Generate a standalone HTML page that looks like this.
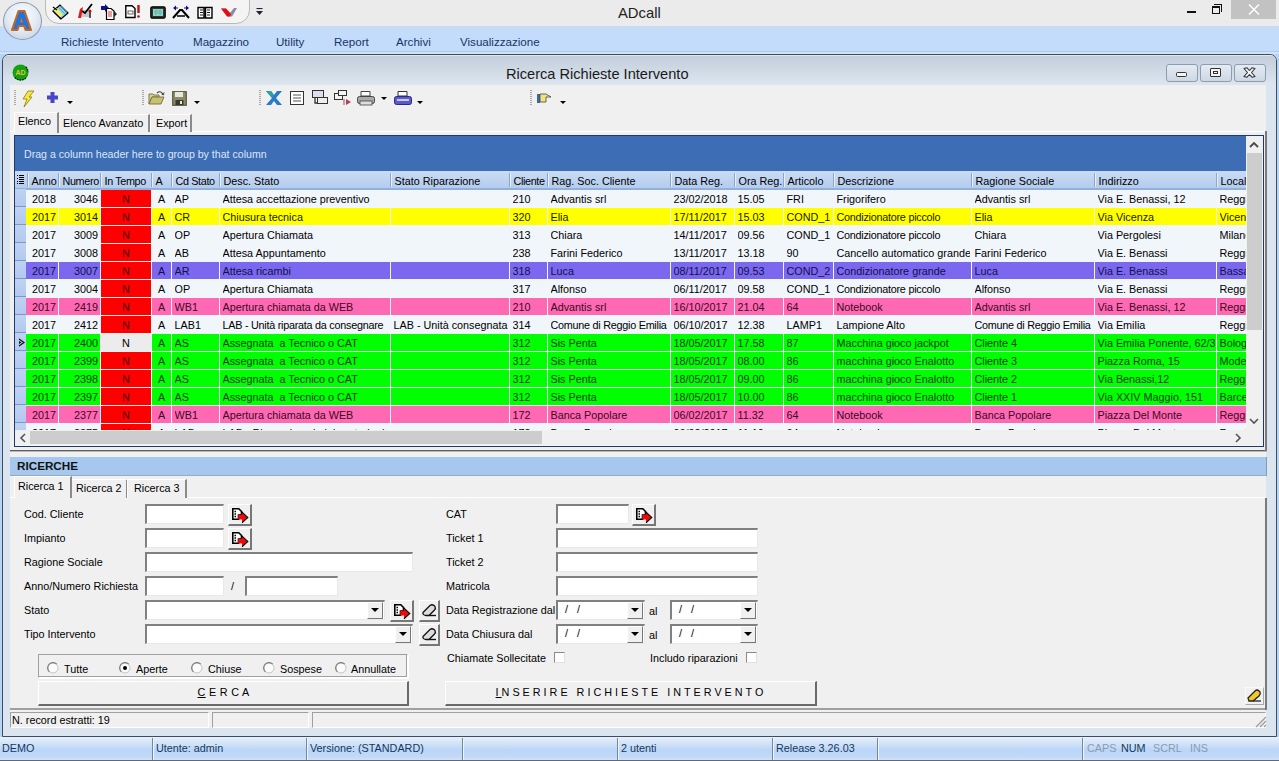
<!DOCTYPE html>
<html><head><meta charset="utf-8"><style>
*{box-sizing:border-box}
body{margin:0;width:1279px;height:761px;overflow:hidden;position:relative;background:#b9d4f1;font-family:"Liberation Sans",sans-serif;font-size:10.8px;color:#000}
div{position:absolute}
.hdr{background:linear-gradient(#cadcf4,#b5ccee);border-bottom:2px solid #91b0e0}
.ind-h{width:12px;height:18px}
.hsep{top:173px;width:2px;height:14px;border-left:1px solid #8aa6cf;border-right:1px solid #e6f0fb}
.ht{top:171px;height:18px;line-height:20px;white-space:nowrap;overflow:hidden;padding-left:1px}
.ind{left:15px;width:11px;height:18px;background:linear-gradient(#bfd2f3,#b3c9ee);border-bottom:1px solid #8096c6}
.cb{height:17px}
.ct{height:17px;line-height:18px;white-space:nowrap;overflow:hidden}
.lbl{white-space:nowrap}
.cwb{border:1px solid #8e9cb0;border-radius:3px;background:linear-gradient(#e4ebf3,#cdd8e5)}
.sp{border-top:1px solid #a0a0a0;border-left:1px solid #a0a0a0;border-right:1px solid #fff;border-bottom:1px solid #fff}
.bigbtn{background:#f0f0f0;border-top:1px solid #fff;border-left:1px solid #fff;border-right:2px solid #6a6a6a;border-bottom:2px solid #6a6a6a}
.inp{background:#fff;border-top:2px solid #808080;border-left:2px solid #808080;border-right:1px solid #e8e8e8;border-bottom:1px solid #e8e8e8}
.btn{background:#f0f0f0;border-top:1px solid #fff;border-left:1px solid #fff;border-right:2px solid #777;border-bottom:2px solid #777}
.dd{background:#f0f0f0;border-top:1px solid #fff;border-left:1px solid #fff;border-right:1px solid #777;border-bottom:1px solid #777}
</style></head><body>
<!-- title bar -->
<div style="left:0;top:0;width:1279px;height:26px;background:#ebebeb"></div>
<div style="left:618px;top:5px;font-size:14.8px;color:#222;white-space:nowrap">ADcall</div>
<!-- window controls -->
<div style="left:1187px;top:11px;width:9px;height:2px;background:#111"></div>
<div style="left:1214px;top:4px;width:8px;height:8px;border:1px solid #111;border-left:none;border-bottom:none"></div>
<div style="left:1212px;top:6px;width:8px;height:8px;border:1px solid #111;border-top-width:2px"></div>
<div style="left:1231px;top:0;width:45px;height:19px;background:#c2c2c2"></div>
<svg style="position:absolute;left:1248px;top:4px" width="12" height="11"><path d="M1 0.5 L11 10.5 M11 0.5 L1 10.5" stroke="#fff" stroke-width="1.4"/></svg>
<!-- menu bar -->
<div style="left:0;top:25px;width:1279px;height:29px;background:linear-gradient(#e6eef8 0 1px,#c9dbef 1px 4px,#c3dcfb 4px 26px,#b3cbe6 26px 27px,#cfe2f8 27px)"></div>
<div class="lbl" style="left:61px;top:35px;font-size:11.6px;color:#173566">Richieste Intervento</div>
<div class="lbl" style="left:193px;top:35px;font-size:11.6px;color:#173566">Magazzino</div>
<div class="lbl" style="left:276px;top:35px;font-size:11.6px;color:#173566">Utility</div>
<div class="lbl" style="left:334px;top:35px;font-size:11.6px;color:#173566">Report</div>
<div class="lbl" style="left:396px;top:35px;font-size:11.6px;color:#173566">Archivi</div>
<div class="lbl" style="left:460px;top:35px;font-size:11.6px;color:#173566">Visualizzazione</div>
<!-- QAT -->
<div style="left:45px;top:-6px;width:205px;height:30px;border:1px solid #b9b9b9;border-radius:0 0 14px 14px;background:#f4f4f4"></div>
<!-- orb -->
<div style="left:3px;top:2px;width:39px;height:38px;border-radius:50%;border:1px solid #8c9aae;background:radial-gradient(circle at 50% 35%,#ffffff,#dfe8f2 55%,#b9c9da)"></div>
<svg style="position:absolute;left:9px;top:8px" width="26" height="26"><path d="M9.5 3 H15.5 L22 22 H16.5 L15.2 18 H9.8 L8.5 22 H3 Z" fill="#2274d8" stroke="#c2692a" stroke-width="2.1" stroke-linejoin="round"/><path d="M11 14.5 H14 L12.5 9.5 Z" fill="#c8743a"/></svg>


<svg style="position:absolute;left:52px;top:4px" width="18" height="16"><path d="M1 7 L8 1 L16 9 L9 15 Z" fill="#8fd6ea" stroke="#000" stroke-width="1.2"/><path d="M1 7 L5 4 L11 11 L7 14 Z" fill="#f2ee70"/><path d="M1 7 L9 15" stroke="#000" stroke-width="1.2"/><path d="M6 3 L13 10 M9 2 L15 8" stroke="#4aa0c8" stroke-width="0.8"/><path d="M1 3 L5 6" stroke="#000" stroke-width="1.2"/></svg>
<svg style="position:absolute;left:77px;top:3px" width="17" height="16"><path d="M3 14 L4 7 L14 7 L14 14 Z" fill="#c8c8d0"/><path d="M1 15 L3 6 L6 4 L4 15 Z" fill="#e01818"/><path d="M5 8 L8 10 L15 1" fill="none" stroke="#000" stroke-width="1.8"/><path d="M13 7 V15" stroke="#000" stroke-width="1.2"/><circle cx="13" cy="8" r="1.5" fill="#c01010"/></svg>
<svg style="position:absolute;left:101px;top:4px" width="17" height="16"><path d="M0 2 H4 V0 L8 4 L4 8 V6 H0 Z" fill="#10108a"/><path d="M5.5 4.5 H10 L13 7 V15.5 H5.5 Z" fill="#fff" stroke="#000" stroke-width="1.2"/><path d="M7 8 H11 M7 10 H11 M7 12 H11" stroke="#d02020" stroke-width="0.9"/><path d="M13 7 L16 10 L13 13" fill="#222"/><path d="M5 16.5 H12" stroke="#000" stroke-dasharray="1 1"/></svg>
<svg style="position:absolute;left:125px;top:5px" width="17" height="14"><path d="M0.8 0.8 H7 L10 3.5 V12.5 H0.8 Z" fill="#fff" stroke="#000" stroke-width="1.4"/><rect x="3" y="6" width="5" height="3" fill="none" stroke="#444" stroke-width="0.8"/><path d="M13.5 0 V8" stroke="#b01818" stroke-width="2.4"/><circle cx="13.5" cy="11.5" r="1.3" fill="#b01818"/></svg>
<svg style="position:absolute;left:150px;top:6px" width="16" height="13"><rect x="0.8" y="0.8" width="14.4" height="11.4" rx="1.5" fill="#333" stroke="#000" stroke-width="1.2"/><rect x="3" y="3" width="10" height="7" fill="#8ad8c8"/><path d="M4 5 H12 M4 7 H12 M6 3.5 V9.5 M10 3.5 V9.5" stroke="#5aa8a0" stroke-width="0.7"/></svg>
<svg style="position:absolute;left:172px;top:5px" width="18" height="14"><path d="M1 13 L8 5 L10 5 L17 13" fill="none" stroke="#000" stroke-width="2"/><path d="M5 11 H13" stroke="#000" stroke-width="1.5"/><path d="M1 3 L4 0.5 V5.5 Z M17 3 L14 0.5 V5.5 Z" fill="#10107a"/><path d="M3 3 H6 M12 3 H15" stroke="#10107a" stroke-width="1.2"/></svg>
<svg style="position:absolute;left:197px;top:6px" width="16" height="13"><path d="M1 1.5 H7 V12 H1 Z M8.5 1.5 H15 V12 H8.5 Z" fill="#fff" stroke="#000" stroke-width="1.4"/><path d="M3 4 H6 M3 6.5 H6 M3 9 H6 M10 4 H13 M10 6.5 H13 M10 9 H13" stroke="#000" stroke-width="0.9"/></svg>
<svg style="position:absolute;left:221px;top:8px" width="16" height="9"><path d="M0 0.5 H5 L9 5 L13 0 H16 L11 8.5 H7 Z" fill="#8a8aa8"/><path d="M0 0.5 H5 L10 6 L9 8.5 H6 Z" fill="#e01010"/></svg>
<svg style="position:absolute;left:256px;top:8px" width="7" height="8"><path d="M0.5 0.5 H6.5" stroke="#223" stroke-width="1.2"/><path d="M0 3 H7 L3.5 7 Z" fill="#223"/></svg>

<!-- MDI child -->
<div style="left:2px;top:54px;width:1275px;height:683px;border:1px solid #3f4d60;border-radius:7px 7px 0 0;background:#dae5f0"></div>
<div style="left:3px;top:55px;width:1273px;height:30px;border-radius:6px 6px 0 0;background:linear-gradient(#dfe8f2 0 1px,#c3cedb 1px,#dde6ef)"></div>
<div style="left:10px;top:85px;width:1256px;height:643px;background:#f0f0f0"></div>

<div style="left:506px;top:66px;font-size:14.6px;color:#1a1a1a;white-space:nowrap">Ricerca Richieste Intervento</div>
<!-- grid -->
<div style="left:14px;top:135px;width:1250px;height:312px;border:1px solid #1d3a6b;background:#f1f6fb"></div>
<div style="left:15px;top:136px;width:1231px;height:35px;background:#3d6db5"></div>
<div class="lbl" style="left:24px;top:148px;font-size:10.6px;color:#dbe7f7">Drag a column header here to group by that column</div>
<div style="left:15px;top:171px;width:1231px;height:259px;overflow:hidden">
<div style="left:-15px;top:-171px;width:1300px;height:500px">
<div class="hdr" style="left:15px;top:171px;width:1231px;height:19px"></div>
<div class="ind-h" style="left:15px;top:171px;"><svg width="12" height="18"><g fill="#000"><rect x="2" y="4" width="1" height="1"/><rect x="4" y="4" width="5" height="1"/><rect x="2" y="7" width="1" height="1"/><rect x="4" y="6" width="5" height="1"/><rect x="4" y="8" width="5" height="1"/><rect x="2" y="10" width="1" height="1"/><rect x="4" y="10" width="5" height="1"/><rect x="2" y="12" width="1" height="1"/><rect x="4" y="12" width="5" height="1"/></g></svg></div>
<div class="hsep" style="left:27px"></div>
<div class="ht" style="left:30.5px;width:27.5px">Anno</div>
<div class="hsep" style="left:58px"></div>
<div class="ht" style="left:61.5px;width:38.5px;letter-spacing:-0.35px">Numero</div>
<div class="hsep" style="left:100px"></div>
<div class="ht" style="left:103.5px;width:47.5px;letter-spacing:-0.35px">In Tempo</div>
<div class="hsep" style="left:151px"></div>
<div class="ht" style="left:154.5px;width:16.5px">A</div>
<div class="hsep" style="left:171px"></div>
<div class="ht" style="left:174.5px;width:44.5px;letter-spacing:-0.35px">Cd Stato</div>
<div class="hsep" style="left:219px"></div>
<div class="ht" style="left:222.5px;width:167.5px">Desc. Stato</div>
<div class="hsep" style="left:390px"></div>
<div class="ht" style="left:393.5px;width:115.5px">Stato Riparazione</div>
<div class="hsep" style="left:509px"></div>
<div class="ht" style="left:512.5px;width:34.5px;letter-spacing:-0.35px">Cliente</div>
<div class="hsep" style="left:547px"></div>
<div class="ht" style="left:550.5px;width:119.5px">Rag. Soc. Cliente</div>
<div class="hsep" style="left:670px"></div>
<div class="ht" style="left:673.5px;width:60.5px">Data Reg.</div>
<div class="hsep" style="left:734px"></div>
<div class="ht" style="left:737.5px;width:45.5px">Ora Reg.</div>
<div class="hsep" style="left:783px"></div>
<div class="ht" style="left:786.5px;width:46.5px">Articolo</div>
<div class="hsep" style="left:833px"></div>
<div class="ht" style="left:836.5px;width:134.5px">Descrizione</div>
<div class="hsep" style="left:971px"></div>
<div class="ht" style="left:974.5px;width:119.5px">Ragione Sociale</div>
<div class="hsep" style="left:1094px"></div>
<div class="ht" style="left:1097.5px;width:118.5px">Indirizzo</div>
<div class="hsep" style="left:1216px"></div>
<div class="ht" style="left:1219.5px;width:180.5px">Località</div>
<div class="ind" style="top:189px"></div>
<div class="cb" style="left:26px;top:190px;width:32px;background:#f1f6fb"></div>
<div class="ct" style="left:28px;width:28px;text-align:right;top:190px;color:#000">2018</div>
<div class="cb" style="left:59px;top:190px;width:41px;background:#f1f6fb"></div>
<div class="ct" style="left:59px;width:39px;text-align:right;top:190px;color:#000">3046</div>
<div class="cb" style="left:101px;top:190px;width:50px;background:#ff0000"></div>
<div class="ct" style="left:101px;width:50px;text-align:center;top:190px;color:#3a0000">N</div>
<div class="cb" style="left:152px;top:190px;width:19px;background:#f1f6fb"></div>
<div class="ct" style="left:152px;width:19px;text-align:center;top:190px;color:#000">A</div>
<div class="cb" style="left:172px;top:190px;width:47px;background:#f1f6fb"></div>
<div class="ct" style="left:174.5px;width:43.5px;top:190px;color:#000">AP</div>
<div class="cb" style="left:220px;top:190px;width:170px;background:#f1f6fb"></div>
<div class="ct" style="left:222.5px;width:166.5px;top:190px;color:#000">Attesa accettazione preventivo</div>
<div class="cb" style="left:391px;top:190px;width:118px;background:#f1f6fb"></div>
<div class="cb" style="left:510px;top:190px;width:37px;background:#f1f6fb"></div>
<div class="ct" style="left:512.5px;width:33.5px;top:190px;color:#000">210</div>
<div class="cb" style="left:548px;top:190px;width:122px;background:#f1f6fb"></div>
<div class="ct" style="left:550.5px;width:118.5px;top:190px;color:#000">Advantis srl</div>
<div class="cb" style="left:671px;top:190px;width:63px;background:#f1f6fb"></div>
<div class="ct" style="left:673.5px;width:59.5px;top:190px;color:#000">23/02/2018</div>
<div class="cb" style="left:735px;top:190px;width:48px;background:#f1f6fb"></div>
<div class="ct" style="left:737.5px;width:44.5px;top:190px;color:#000">15.05</div>
<div class="cb" style="left:784px;top:190px;width:49px;background:#f1f6fb"></div>
<div class="ct" style="left:786.5px;width:45.5px;top:190px;color:#000">FRI</div>
<div class="cb" style="left:834px;top:190px;width:137px;background:#f1f6fb"></div>
<div class="ct" style="left:836.5px;width:133.5px;top:190px;color:#000">Frigorifero</div>
<div class="cb" style="left:972px;top:190px;width:122px;background:#f1f6fb"></div>
<div class="ct" style="left:974.5px;width:118.5px;top:190px;color:#000">Advantis srl</div>
<div class="cb" style="left:1095px;top:190px;width:121px;background:#f1f6fb"></div>
<div class="ct" style="left:1097.5px;width:117.5px;top:190px;color:#000">Via E. Benassi, 12</div>
<div class="cb" style="left:1217px;top:190px;width:183px;background:#f1f6fb"></div>
<div class="ct" style="left:1219.5px;width:179.5px;top:190px;color:#000">Reggio Emilia</div>
<div class="ind" style="top:207px"></div>
<div class="cb" style="left:26px;top:208px;width:32px;background:#ffff00"></div>
<div class="ct" style="left:28px;width:28px;text-align:right;top:208px;color:#1a1a00">2017</div>
<div class="cb" style="left:59px;top:208px;width:41px;background:#ffff00"></div>
<div class="ct" style="left:59px;width:39px;text-align:right;top:208px;color:#1a1a00">3014</div>
<div class="cb" style="left:101px;top:208px;width:50px;background:#ff0000"></div>
<div class="ct" style="left:101px;width:50px;text-align:center;top:208px;color:#3a0000">N</div>
<div class="cb" style="left:152px;top:208px;width:19px;background:#ffff00"></div>
<div class="ct" style="left:152px;width:19px;text-align:center;top:208px;color:#1a1a00">A</div>
<div class="cb" style="left:172px;top:208px;width:47px;background:#ffff00"></div>
<div class="ct" style="left:174.5px;width:43.5px;top:208px;color:#1a1a00">CR</div>
<div class="cb" style="left:220px;top:208px;width:170px;background:#ffff00"></div>
<div class="ct" style="left:222.5px;width:166.5px;top:208px;color:#1a1a00">Chiusura tecnica</div>
<div class="cb" style="left:391px;top:208px;width:118px;background:#ffff00"></div>
<div class="cb" style="left:510px;top:208px;width:37px;background:#ffff00"></div>
<div class="ct" style="left:512.5px;width:33.5px;top:208px;color:#1a1a00">320</div>
<div class="cb" style="left:548px;top:208px;width:122px;background:#ffff00"></div>
<div class="ct" style="left:550.5px;width:118.5px;top:208px;color:#1a1a00">Elia</div>
<div class="cb" style="left:671px;top:208px;width:63px;background:#ffff00"></div>
<div class="ct" style="left:673.5px;width:59.5px;top:208px;color:#1a1a00">17/11/2017</div>
<div class="cb" style="left:735px;top:208px;width:48px;background:#ffff00"></div>
<div class="ct" style="left:737.5px;width:44.5px;top:208px;color:#1a1a00">15.03</div>
<div class="cb" style="left:784px;top:208px;width:49px;background:#ffff00"></div>
<div class="ct" style="left:786.5px;width:45.5px;top:208px;color:#1a1a00">COND_1</div>
<div class="cb" style="left:834px;top:208px;width:137px;background:#ffff00"></div>
<div class="ct" style="left:836.5px;width:133.5px;top:208px;color:#1a1a00;letter-spacing:-0.25px">Condizionatore piccolo</div>
<div class="cb" style="left:972px;top:208px;width:122px;background:#ffff00"></div>
<div class="ct" style="left:974.5px;width:118.5px;top:208px;color:#1a1a00">Elia</div>
<div class="cb" style="left:1095px;top:208px;width:121px;background:#ffff00"></div>
<div class="ct" style="left:1097.5px;width:117.5px;top:208px;color:#1a1a00">Via Vicenza</div>
<div class="cb" style="left:1217px;top:208px;width:183px;background:#ffff00"></div>
<div class="ct" style="left:1219.5px;width:179.5px;top:208px;color:#1a1a00">Vicenza</div>
<div class="ind" style="top:225px"></div>
<div class="cb" style="left:26px;top:226px;width:32px;background:#f1f6fb"></div>
<div class="ct" style="left:28px;width:28px;text-align:right;top:226px;color:#000">2017</div>
<div class="cb" style="left:59px;top:226px;width:41px;background:#f1f6fb"></div>
<div class="ct" style="left:59px;width:39px;text-align:right;top:226px;color:#000">3009</div>
<div class="cb" style="left:101px;top:226px;width:50px;background:#ff0000"></div>
<div class="ct" style="left:101px;width:50px;text-align:center;top:226px;color:#3a0000">N</div>
<div class="cb" style="left:152px;top:226px;width:19px;background:#f1f6fb"></div>
<div class="ct" style="left:152px;width:19px;text-align:center;top:226px;color:#000">A</div>
<div class="cb" style="left:172px;top:226px;width:47px;background:#f1f6fb"></div>
<div class="ct" style="left:174.5px;width:43.5px;top:226px;color:#000">OP</div>
<div class="cb" style="left:220px;top:226px;width:170px;background:#f1f6fb"></div>
<div class="ct" style="left:222.5px;width:166.5px;top:226px;color:#000">Apertura Chiamata</div>
<div class="cb" style="left:391px;top:226px;width:118px;background:#f1f6fb"></div>
<div class="cb" style="left:510px;top:226px;width:37px;background:#f1f6fb"></div>
<div class="ct" style="left:512.5px;width:33.5px;top:226px;color:#000">313</div>
<div class="cb" style="left:548px;top:226px;width:122px;background:#f1f6fb"></div>
<div class="ct" style="left:550.5px;width:118.5px;top:226px;color:#000">Chiara</div>
<div class="cb" style="left:671px;top:226px;width:63px;background:#f1f6fb"></div>
<div class="ct" style="left:673.5px;width:59.5px;top:226px;color:#000">14/11/2017</div>
<div class="cb" style="left:735px;top:226px;width:48px;background:#f1f6fb"></div>
<div class="ct" style="left:737.5px;width:44.5px;top:226px;color:#000">09.56</div>
<div class="cb" style="left:784px;top:226px;width:49px;background:#f1f6fb"></div>
<div class="ct" style="left:786.5px;width:45.5px;top:226px;color:#000">COND_1</div>
<div class="cb" style="left:834px;top:226px;width:137px;background:#f1f6fb"></div>
<div class="ct" style="left:836.5px;width:133.5px;top:226px;color:#000;letter-spacing:-0.25px">Condizionatore piccolo</div>
<div class="cb" style="left:972px;top:226px;width:122px;background:#f1f6fb"></div>
<div class="ct" style="left:974.5px;width:118.5px;top:226px;color:#000">Chiara</div>
<div class="cb" style="left:1095px;top:226px;width:121px;background:#f1f6fb"></div>
<div class="ct" style="left:1097.5px;width:117.5px;top:226px;color:#000">Via Pergolesi</div>
<div class="cb" style="left:1217px;top:226px;width:183px;background:#f1f6fb"></div>
<div class="ct" style="left:1219.5px;width:179.5px;top:226px;color:#000">Milano</div>
<div class="ind" style="top:243px"></div>
<div class="cb" style="left:26px;top:244px;width:32px;background:#f1f6fb"></div>
<div class="ct" style="left:28px;width:28px;text-align:right;top:244px;color:#000">2017</div>
<div class="cb" style="left:59px;top:244px;width:41px;background:#f1f6fb"></div>
<div class="ct" style="left:59px;width:39px;text-align:right;top:244px;color:#000">3008</div>
<div class="cb" style="left:101px;top:244px;width:50px;background:#ff0000"></div>
<div class="ct" style="left:101px;width:50px;text-align:center;top:244px;color:#3a0000">N</div>
<div class="cb" style="left:152px;top:244px;width:19px;background:#f1f6fb"></div>
<div class="ct" style="left:152px;width:19px;text-align:center;top:244px;color:#000">A</div>
<div class="cb" style="left:172px;top:244px;width:47px;background:#f1f6fb"></div>
<div class="ct" style="left:174.5px;width:43.5px;top:244px;color:#000">AB</div>
<div class="cb" style="left:220px;top:244px;width:170px;background:#f1f6fb"></div>
<div class="ct" style="left:222.5px;width:166.5px;top:244px;color:#000">Attesa Appuntamento</div>
<div class="cb" style="left:391px;top:244px;width:118px;background:#f1f6fb"></div>
<div class="cb" style="left:510px;top:244px;width:37px;background:#f1f6fb"></div>
<div class="ct" style="left:512.5px;width:33.5px;top:244px;color:#000">238</div>
<div class="cb" style="left:548px;top:244px;width:122px;background:#f1f6fb"></div>
<div class="ct" style="left:550.5px;width:118.5px;top:244px;color:#000">Farini Federico</div>
<div class="cb" style="left:671px;top:244px;width:63px;background:#f1f6fb"></div>
<div class="ct" style="left:673.5px;width:59.5px;top:244px;color:#000">13/11/2017</div>
<div class="cb" style="left:735px;top:244px;width:48px;background:#f1f6fb"></div>
<div class="ct" style="left:737.5px;width:44.5px;top:244px;color:#000">13.18</div>
<div class="cb" style="left:784px;top:244px;width:49px;background:#f1f6fb"></div>
<div class="ct" style="left:786.5px;width:45.5px;top:244px;color:#000">90</div>
<div class="cb" style="left:834px;top:244px;width:137px;background:#f1f6fb"></div>
<div class="ct" style="left:836.5px;width:133.5px;top:244px;color:#000">Cancello automatico grande</div>
<div class="cb" style="left:972px;top:244px;width:122px;background:#f1f6fb"></div>
<div class="ct" style="left:974.5px;width:118.5px;top:244px;color:#000">Farini Federico</div>
<div class="cb" style="left:1095px;top:244px;width:121px;background:#f1f6fb"></div>
<div class="ct" style="left:1097.5px;width:117.5px;top:244px;color:#000">Via E. Benassi</div>
<div class="cb" style="left:1217px;top:244px;width:183px;background:#f1f6fb"></div>
<div class="ct" style="left:1219.5px;width:179.5px;top:244px;color:#000">Reggio Emilia</div>
<div class="ind" style="top:261px"></div>
<div class="cb" style="left:26px;top:262px;width:32px;background:#7b68ee"></div>
<div class="ct" style="left:28px;width:28px;text-align:right;top:262px;color:#10104a">2017</div>
<div class="cb" style="left:59px;top:262px;width:41px;background:#7b68ee"></div>
<div class="ct" style="left:59px;width:39px;text-align:right;top:262px;color:#10104a">3007</div>
<div class="cb" style="left:101px;top:262px;width:50px;background:#ff0000"></div>
<div class="ct" style="left:101px;width:50px;text-align:center;top:262px;color:#3a0000">N</div>
<div class="cb" style="left:152px;top:262px;width:19px;background:#7b68ee"></div>
<div class="ct" style="left:152px;width:19px;text-align:center;top:262px;color:#10104a">A</div>
<div class="cb" style="left:172px;top:262px;width:47px;background:#7b68ee"></div>
<div class="ct" style="left:174.5px;width:43.5px;top:262px;color:#10104a">AR</div>
<div class="cb" style="left:220px;top:262px;width:170px;background:#7b68ee"></div>
<div class="ct" style="left:222.5px;width:166.5px;top:262px;color:#10104a">Attesa ricambi</div>
<div class="cb" style="left:391px;top:262px;width:118px;background:#7b68ee"></div>
<div class="cb" style="left:510px;top:262px;width:37px;background:#7b68ee"></div>
<div class="ct" style="left:512.5px;width:33.5px;top:262px;color:#10104a">318</div>
<div class="cb" style="left:548px;top:262px;width:122px;background:#7b68ee"></div>
<div class="ct" style="left:550.5px;width:118.5px;top:262px;color:#10104a">Luca</div>
<div class="cb" style="left:671px;top:262px;width:63px;background:#7b68ee"></div>
<div class="ct" style="left:673.5px;width:59.5px;top:262px;color:#10104a">08/11/2017</div>
<div class="cb" style="left:735px;top:262px;width:48px;background:#7b68ee"></div>
<div class="ct" style="left:737.5px;width:44.5px;top:262px;color:#10104a">09.53</div>
<div class="cb" style="left:784px;top:262px;width:49px;background:#7b68ee"></div>
<div class="ct" style="left:786.5px;width:45.5px;top:262px;color:#10104a">COND_2</div>
<div class="cb" style="left:834px;top:262px;width:137px;background:#7b68ee"></div>
<div class="ct" style="left:836.5px;width:133.5px;top:262px;color:#10104a">Condizionatore grande</div>
<div class="cb" style="left:972px;top:262px;width:122px;background:#7b68ee"></div>
<div class="ct" style="left:974.5px;width:118.5px;top:262px;color:#10104a">Luca</div>
<div class="cb" style="left:1095px;top:262px;width:121px;background:#7b68ee"></div>
<div class="ct" style="left:1097.5px;width:117.5px;top:262px;color:#10104a">Via E. Benassi</div>
<div class="cb" style="left:1217px;top:262px;width:183px;background:#7b68ee"></div>
<div class="ct" style="left:1219.5px;width:179.5px;top:262px;color:#10104a">Bassano</div>
<div class="ind" style="top:279px"></div>
<div class="cb" style="left:26px;top:280px;width:32px;background:#f1f6fb"></div>
<div class="ct" style="left:28px;width:28px;text-align:right;top:280px;color:#000">2017</div>
<div class="cb" style="left:59px;top:280px;width:41px;background:#f1f6fb"></div>
<div class="ct" style="left:59px;width:39px;text-align:right;top:280px;color:#000">3004</div>
<div class="cb" style="left:101px;top:280px;width:50px;background:#ff0000"></div>
<div class="ct" style="left:101px;width:50px;text-align:center;top:280px;color:#3a0000">N</div>
<div class="cb" style="left:152px;top:280px;width:19px;background:#f1f6fb"></div>
<div class="ct" style="left:152px;width:19px;text-align:center;top:280px;color:#000">A</div>
<div class="cb" style="left:172px;top:280px;width:47px;background:#f1f6fb"></div>
<div class="ct" style="left:174.5px;width:43.5px;top:280px;color:#000">OP</div>
<div class="cb" style="left:220px;top:280px;width:170px;background:#f1f6fb"></div>
<div class="ct" style="left:222.5px;width:166.5px;top:280px;color:#000">Apertura Chiamata</div>
<div class="cb" style="left:391px;top:280px;width:118px;background:#f1f6fb"></div>
<div class="cb" style="left:510px;top:280px;width:37px;background:#f1f6fb"></div>
<div class="ct" style="left:512.5px;width:33.5px;top:280px;color:#000">317</div>
<div class="cb" style="left:548px;top:280px;width:122px;background:#f1f6fb"></div>
<div class="ct" style="left:550.5px;width:118.5px;top:280px;color:#000">Alfonso</div>
<div class="cb" style="left:671px;top:280px;width:63px;background:#f1f6fb"></div>
<div class="ct" style="left:673.5px;width:59.5px;top:280px;color:#000">06/11/2017</div>
<div class="cb" style="left:735px;top:280px;width:48px;background:#f1f6fb"></div>
<div class="ct" style="left:737.5px;width:44.5px;top:280px;color:#000">09.58</div>
<div class="cb" style="left:784px;top:280px;width:49px;background:#f1f6fb"></div>
<div class="ct" style="left:786.5px;width:45.5px;top:280px;color:#000">COND_1</div>
<div class="cb" style="left:834px;top:280px;width:137px;background:#f1f6fb"></div>
<div class="ct" style="left:836.5px;width:133.5px;top:280px;color:#000;letter-spacing:-0.25px">Condizionatore piccolo</div>
<div class="cb" style="left:972px;top:280px;width:122px;background:#f1f6fb"></div>
<div class="ct" style="left:974.5px;width:118.5px;top:280px;color:#000">Alfonso</div>
<div class="cb" style="left:1095px;top:280px;width:121px;background:#f1f6fb"></div>
<div class="ct" style="left:1097.5px;width:117.5px;top:280px;color:#000">Via E. Benassi</div>
<div class="cb" style="left:1217px;top:280px;width:183px;background:#f1f6fb"></div>
<div class="ct" style="left:1219.5px;width:179.5px;top:280px;color:#000">Reggio Emilia</div>
<div class="ind" style="top:297px"></div>
<div class="cb" style="left:26px;top:298px;width:32px;background:#ff69b4"></div>
<div class="ct" style="left:28px;width:28px;text-align:right;top:298px;color:#3a0a20">2017</div>
<div class="cb" style="left:59px;top:298px;width:41px;background:#ff69b4"></div>
<div class="ct" style="left:59px;width:39px;text-align:right;top:298px;color:#3a0a20">2419</div>
<div class="cb" style="left:101px;top:298px;width:50px;background:#ff0000"></div>
<div class="ct" style="left:101px;width:50px;text-align:center;top:298px;color:#3a0000">N</div>
<div class="cb" style="left:152px;top:298px;width:19px;background:#ff69b4"></div>
<div class="ct" style="left:152px;width:19px;text-align:center;top:298px;color:#3a0a20">A</div>
<div class="cb" style="left:172px;top:298px;width:47px;background:#ff69b4"></div>
<div class="ct" style="left:174.5px;width:43.5px;top:298px;color:#3a0a20">WB1</div>
<div class="cb" style="left:220px;top:298px;width:170px;background:#ff69b4"></div>
<div class="ct" style="left:222.5px;width:166.5px;top:298px;color:#3a0a20">Apertura chiamata da WEB</div>
<div class="cb" style="left:391px;top:298px;width:118px;background:#ff69b4"></div>
<div class="cb" style="left:510px;top:298px;width:37px;background:#ff69b4"></div>
<div class="ct" style="left:512.5px;width:33.5px;top:298px;color:#3a0a20">210</div>
<div class="cb" style="left:548px;top:298px;width:122px;background:#ff69b4"></div>
<div class="ct" style="left:550.5px;width:118.5px;top:298px;color:#3a0a20">Advantis srl</div>
<div class="cb" style="left:671px;top:298px;width:63px;background:#ff69b4"></div>
<div class="ct" style="left:673.5px;width:59.5px;top:298px;color:#3a0a20">16/10/2017</div>
<div class="cb" style="left:735px;top:298px;width:48px;background:#ff69b4"></div>
<div class="ct" style="left:737.5px;width:44.5px;top:298px;color:#3a0a20">21.04</div>
<div class="cb" style="left:784px;top:298px;width:49px;background:#ff69b4"></div>
<div class="ct" style="left:786.5px;width:45.5px;top:298px;color:#3a0a20">64</div>
<div class="cb" style="left:834px;top:298px;width:137px;background:#ff69b4"></div>
<div class="ct" style="left:836.5px;width:133.5px;top:298px;color:#3a0a20">Notebook</div>
<div class="cb" style="left:972px;top:298px;width:122px;background:#ff69b4"></div>
<div class="ct" style="left:974.5px;width:118.5px;top:298px;color:#3a0a20">Advantis srl</div>
<div class="cb" style="left:1095px;top:298px;width:121px;background:#ff69b4"></div>
<div class="ct" style="left:1097.5px;width:117.5px;top:298px;color:#3a0a20">Via E. Benassi, 12</div>
<div class="cb" style="left:1217px;top:298px;width:183px;background:#ff69b4"></div>
<div class="ct" style="left:1219.5px;width:179.5px;top:298px;color:#3a0a20">Reggio Emilia</div>
<div class="ind" style="top:315px"></div>
<div class="cb" style="left:26px;top:316px;width:32px;background:#f1f6fb"></div>
<div class="ct" style="left:28px;width:28px;text-align:right;top:316px;color:#000">2017</div>
<div class="cb" style="left:59px;top:316px;width:41px;background:#f1f6fb"></div>
<div class="ct" style="left:59px;width:39px;text-align:right;top:316px;color:#000">2412</div>
<div class="cb" style="left:101px;top:316px;width:50px;background:#ff0000"></div>
<div class="ct" style="left:101px;width:50px;text-align:center;top:316px;color:#3a0000">N</div>
<div class="cb" style="left:152px;top:316px;width:19px;background:#f1f6fb"></div>
<div class="ct" style="left:152px;width:19px;text-align:center;top:316px;color:#000">A</div>
<div class="cb" style="left:172px;top:316px;width:47px;background:#f1f6fb"></div>
<div class="ct" style="left:174.5px;width:43.5px;top:316px;color:#000">LAB1</div>
<div class="cb" style="left:220px;top:316px;width:170px;background:#f1f6fb"></div>
<div class="ct" style="left:222.5px;width:166.5px;top:316px;color:#000;letter-spacing:-0.25px">LAB - Unità riparata da consegnare</div>
<div class="cb" style="left:391px;top:316px;width:118px;background:#f1f6fb"></div>
<div class="ct" style="left:393.5px;width:114.5px;top:316px;color:#000">LAB - Unità consegnata</div>
<div class="cb" style="left:510px;top:316px;width:37px;background:#f1f6fb"></div>
<div class="ct" style="left:512.5px;width:33.5px;top:316px;color:#000">314</div>
<div class="cb" style="left:548px;top:316px;width:122px;background:#f1f6fb"></div>
<div class="ct" style="left:550.5px;width:118.5px;top:316px;color:#000;letter-spacing:-0.25px">Comune di Reggio Emilia</div>
<div class="cb" style="left:671px;top:316px;width:63px;background:#f1f6fb"></div>
<div class="ct" style="left:673.5px;width:59.5px;top:316px;color:#000">06/10/2017</div>
<div class="cb" style="left:735px;top:316px;width:48px;background:#f1f6fb"></div>
<div class="ct" style="left:737.5px;width:44.5px;top:316px;color:#000">12.38</div>
<div class="cb" style="left:784px;top:316px;width:49px;background:#f1f6fb"></div>
<div class="ct" style="left:786.5px;width:45.5px;top:316px;color:#000">LAMP1</div>
<div class="cb" style="left:834px;top:316px;width:137px;background:#f1f6fb"></div>
<div class="ct" style="left:836.5px;width:133.5px;top:316px;color:#000">Lampione Alto</div>
<div class="cb" style="left:972px;top:316px;width:122px;background:#f1f6fb"></div>
<div class="ct" style="left:974.5px;width:118.5px;top:316px;color:#000;letter-spacing:-0.25px">Comune di Reggio Emilia</div>
<div class="cb" style="left:1095px;top:316px;width:121px;background:#f1f6fb"></div>
<div class="ct" style="left:1097.5px;width:117.5px;top:316px;color:#000">Via Emilia</div>
<div class="cb" style="left:1217px;top:316px;width:183px;background:#f1f6fb"></div>
<div class="ct" style="left:1219.5px;width:179.5px;top:316px;color:#000">Reggio Emilia</div>
<div class="ind" style="top:333px"></div>
<svg style="position:absolute;left:18px;top:338px" width="7" height="9"><path d="M1 1 L6 4.5 L1 8" fill="none" stroke="#111" stroke-width="1.3"/><path d="M1 3 L3.5 4.5 L1 6 Z" fill="#111"/></svg>
<div class="cb" style="left:26px;top:334px;width:32px;background:#00ff00"></div>
<div class="ct" style="left:28px;width:28px;text-align:right;top:334px;color:#0a3a0a">2017</div>
<div class="cb" style="left:59px;top:334px;width:41px;background:#00ff00"></div>
<div class="ct" style="left:59px;width:39px;text-align:right;top:334px;color:#0a3a0a">2400</div>
<div class="cb" style="left:101px;top:334px;width:50px;background:#ececec"></div>
<div class="ct" style="left:101px;width:50px;text-align:center;top:334px;color:#000">N</div>
<div class="cb" style="left:152px;top:334px;width:19px;background:#00ff00"></div>
<div class="ct" style="left:152px;width:19px;text-align:center;top:334px;color:#0a3a0a">A</div>
<div class="cb" style="left:172px;top:334px;width:47px;background:#00ff00"></div>
<div class="ct" style="left:174.5px;width:43.5px;top:334px;color:#0a3a0a">AS</div>
<div class="cb" style="left:220px;top:334px;width:170px;background:#00ff00"></div>
<div class="ct" style="left:222.5px;width:166.5px;top:334px;color:#0a3a0a">Assegnata&nbsp; a Tecnico o CAT</div>
<div class="cb" style="left:391px;top:334px;width:118px;background:#00ff00"></div>
<div class="cb" style="left:510px;top:334px;width:37px;background:#00ff00"></div>
<div class="ct" style="left:512.5px;width:33.5px;top:334px;color:#0a3a0a">312</div>
<div class="cb" style="left:548px;top:334px;width:122px;background:#00ff00"></div>
<div class="ct" style="left:550.5px;width:118.5px;top:334px;color:#0a3a0a">Sis Penta</div>
<div class="cb" style="left:671px;top:334px;width:63px;background:#00ff00"></div>
<div class="ct" style="left:673.5px;width:59.5px;top:334px;color:#0a3a0a">18/05/2017</div>
<div class="cb" style="left:735px;top:334px;width:48px;background:#00ff00"></div>
<div class="ct" style="left:737.5px;width:44.5px;top:334px;color:#0a3a0a">17.58</div>
<div class="cb" style="left:784px;top:334px;width:49px;background:#00ff00"></div>
<div class="ct" style="left:786.5px;width:45.5px;top:334px;color:#0a3a0a">87</div>
<div class="cb" style="left:834px;top:334px;width:137px;background:#00ff00"></div>
<div class="ct" style="left:836.5px;width:133.5px;top:334px;color:#0a3a0a">Macchina gioco jackpot</div>
<div class="cb" style="left:972px;top:334px;width:122px;background:#00ff00"></div>
<div class="ct" style="left:974.5px;width:118.5px;top:334px;color:#0a3a0a">Cliente 4</div>
<div class="cb" style="left:1095px;top:334px;width:121px;background:#00ff00"></div>
<div class="ct" style="left:1097.5px;width:117.5px;top:334px;color:#0a3a0a">Via Emilia Ponente, 62/3</div>
<div class="cb" style="left:1217px;top:334px;width:183px;background:#00ff00"></div>
<div class="ct" style="left:1219.5px;width:179.5px;top:334px;color:#0a3a0a">Bologna</div>
<div class="ind" style="top:351px"></div>
<div class="cb" style="left:26px;top:352px;width:32px;background:#00ff00"></div>
<div class="ct" style="left:28px;width:28px;text-align:right;top:352px;color:#0a3a0a">2017</div>
<div class="cb" style="left:59px;top:352px;width:41px;background:#00ff00"></div>
<div class="ct" style="left:59px;width:39px;text-align:right;top:352px;color:#0a3a0a">2399</div>
<div class="cb" style="left:101px;top:352px;width:50px;background:#ff0000"></div>
<div class="ct" style="left:101px;width:50px;text-align:center;top:352px;color:#3a0000">N</div>
<div class="cb" style="left:152px;top:352px;width:19px;background:#00ff00"></div>
<div class="ct" style="left:152px;width:19px;text-align:center;top:352px;color:#0a3a0a">A</div>
<div class="cb" style="left:172px;top:352px;width:47px;background:#00ff00"></div>
<div class="ct" style="left:174.5px;width:43.5px;top:352px;color:#0a3a0a">AS</div>
<div class="cb" style="left:220px;top:352px;width:170px;background:#00ff00"></div>
<div class="ct" style="left:222.5px;width:166.5px;top:352px;color:#0a3a0a">Assegnata&nbsp; a Tecnico o CAT</div>
<div class="cb" style="left:391px;top:352px;width:118px;background:#00ff00"></div>
<div class="cb" style="left:510px;top:352px;width:37px;background:#00ff00"></div>
<div class="ct" style="left:512.5px;width:33.5px;top:352px;color:#0a3a0a">312</div>
<div class="cb" style="left:548px;top:352px;width:122px;background:#00ff00"></div>
<div class="ct" style="left:550.5px;width:118.5px;top:352px;color:#0a3a0a">Sis Penta</div>
<div class="cb" style="left:671px;top:352px;width:63px;background:#00ff00"></div>
<div class="ct" style="left:673.5px;width:59.5px;top:352px;color:#0a3a0a">18/05/2017</div>
<div class="cb" style="left:735px;top:352px;width:48px;background:#00ff00"></div>
<div class="ct" style="left:737.5px;width:44.5px;top:352px;color:#0a3a0a">08.00</div>
<div class="cb" style="left:784px;top:352px;width:49px;background:#00ff00"></div>
<div class="ct" style="left:786.5px;width:45.5px;top:352px;color:#0a3a0a">86</div>
<div class="cb" style="left:834px;top:352px;width:137px;background:#00ff00"></div>
<div class="ct" style="left:836.5px;width:133.5px;top:352px;color:#0a3a0a">macchina gioco Enalotto</div>
<div class="cb" style="left:972px;top:352px;width:122px;background:#00ff00"></div>
<div class="ct" style="left:974.5px;width:118.5px;top:352px;color:#0a3a0a">Cliente 3</div>
<div class="cb" style="left:1095px;top:352px;width:121px;background:#00ff00"></div>
<div class="ct" style="left:1097.5px;width:117.5px;top:352px;color:#0a3a0a">Piazza Roma, 15</div>
<div class="cb" style="left:1217px;top:352px;width:183px;background:#00ff00"></div>
<div class="ct" style="left:1219.5px;width:179.5px;top:352px;color:#0a3a0a">Modena</div>
<div class="ind" style="top:369px"></div>
<div class="cb" style="left:26px;top:370px;width:32px;background:#00ff00"></div>
<div class="ct" style="left:28px;width:28px;text-align:right;top:370px;color:#0a3a0a">2017</div>
<div class="cb" style="left:59px;top:370px;width:41px;background:#00ff00"></div>
<div class="ct" style="left:59px;width:39px;text-align:right;top:370px;color:#0a3a0a">2398</div>
<div class="cb" style="left:101px;top:370px;width:50px;background:#ff0000"></div>
<div class="ct" style="left:101px;width:50px;text-align:center;top:370px;color:#3a0000">N</div>
<div class="cb" style="left:152px;top:370px;width:19px;background:#00ff00"></div>
<div class="ct" style="left:152px;width:19px;text-align:center;top:370px;color:#0a3a0a">A</div>
<div class="cb" style="left:172px;top:370px;width:47px;background:#00ff00"></div>
<div class="ct" style="left:174.5px;width:43.5px;top:370px;color:#0a3a0a">AS</div>
<div class="cb" style="left:220px;top:370px;width:170px;background:#00ff00"></div>
<div class="ct" style="left:222.5px;width:166.5px;top:370px;color:#0a3a0a">Assegnata&nbsp; a Tecnico o CAT</div>
<div class="cb" style="left:391px;top:370px;width:118px;background:#00ff00"></div>
<div class="cb" style="left:510px;top:370px;width:37px;background:#00ff00"></div>
<div class="ct" style="left:512.5px;width:33.5px;top:370px;color:#0a3a0a">312</div>
<div class="cb" style="left:548px;top:370px;width:122px;background:#00ff00"></div>
<div class="ct" style="left:550.5px;width:118.5px;top:370px;color:#0a3a0a">Sis Penta</div>
<div class="cb" style="left:671px;top:370px;width:63px;background:#00ff00"></div>
<div class="ct" style="left:673.5px;width:59.5px;top:370px;color:#0a3a0a">18/05/2017</div>
<div class="cb" style="left:735px;top:370px;width:48px;background:#00ff00"></div>
<div class="ct" style="left:737.5px;width:44.5px;top:370px;color:#0a3a0a">09.00</div>
<div class="cb" style="left:784px;top:370px;width:49px;background:#00ff00"></div>
<div class="ct" style="left:786.5px;width:45.5px;top:370px;color:#0a3a0a">86</div>
<div class="cb" style="left:834px;top:370px;width:137px;background:#00ff00"></div>
<div class="ct" style="left:836.5px;width:133.5px;top:370px;color:#0a3a0a">macchina gioco Enalotto</div>
<div class="cb" style="left:972px;top:370px;width:122px;background:#00ff00"></div>
<div class="ct" style="left:974.5px;width:118.5px;top:370px;color:#0a3a0a">Cliente 2</div>
<div class="cb" style="left:1095px;top:370px;width:121px;background:#00ff00"></div>
<div class="ct" style="left:1097.5px;width:117.5px;top:370px;color:#0a3a0a">Via Benassi,12</div>
<div class="cb" style="left:1217px;top:370px;width:183px;background:#00ff00"></div>
<div class="ct" style="left:1219.5px;width:179.5px;top:370px;color:#0a3a0a">Reggio Emilia</div>
<div class="ind" style="top:387px"></div>
<div class="cb" style="left:26px;top:388px;width:32px;background:#00ff00"></div>
<div class="ct" style="left:28px;width:28px;text-align:right;top:388px;color:#0a3a0a">2017</div>
<div class="cb" style="left:59px;top:388px;width:41px;background:#00ff00"></div>
<div class="ct" style="left:59px;width:39px;text-align:right;top:388px;color:#0a3a0a">2397</div>
<div class="cb" style="left:101px;top:388px;width:50px;background:#ff0000"></div>
<div class="ct" style="left:101px;width:50px;text-align:center;top:388px;color:#3a0000">N</div>
<div class="cb" style="left:152px;top:388px;width:19px;background:#00ff00"></div>
<div class="ct" style="left:152px;width:19px;text-align:center;top:388px;color:#0a3a0a">A</div>
<div class="cb" style="left:172px;top:388px;width:47px;background:#00ff00"></div>
<div class="ct" style="left:174.5px;width:43.5px;top:388px;color:#0a3a0a">AS</div>
<div class="cb" style="left:220px;top:388px;width:170px;background:#00ff00"></div>
<div class="ct" style="left:222.5px;width:166.5px;top:388px;color:#0a3a0a">Assegnata&nbsp; a Tecnico o CAT</div>
<div class="cb" style="left:391px;top:388px;width:118px;background:#00ff00"></div>
<div class="cb" style="left:510px;top:388px;width:37px;background:#00ff00"></div>
<div class="ct" style="left:512.5px;width:33.5px;top:388px;color:#0a3a0a">312</div>
<div class="cb" style="left:548px;top:388px;width:122px;background:#00ff00"></div>
<div class="ct" style="left:550.5px;width:118.5px;top:388px;color:#0a3a0a">Sis Penta</div>
<div class="cb" style="left:671px;top:388px;width:63px;background:#00ff00"></div>
<div class="ct" style="left:673.5px;width:59.5px;top:388px;color:#0a3a0a">18/05/2017</div>
<div class="cb" style="left:735px;top:388px;width:48px;background:#00ff00"></div>
<div class="ct" style="left:737.5px;width:44.5px;top:388px;color:#0a3a0a">10.00</div>
<div class="cb" style="left:784px;top:388px;width:49px;background:#00ff00"></div>
<div class="ct" style="left:786.5px;width:45.5px;top:388px;color:#0a3a0a">86</div>
<div class="cb" style="left:834px;top:388px;width:137px;background:#00ff00"></div>
<div class="ct" style="left:836.5px;width:133.5px;top:388px;color:#0a3a0a">macchina gioco Enalotto</div>
<div class="cb" style="left:972px;top:388px;width:122px;background:#00ff00"></div>
<div class="ct" style="left:974.5px;width:118.5px;top:388px;color:#0a3a0a">Cliente 1</div>
<div class="cb" style="left:1095px;top:388px;width:121px;background:#00ff00"></div>
<div class="ct" style="left:1097.5px;width:117.5px;top:388px;color:#0a3a0a">Via XXIV Maggio, 151</div>
<div class="cb" style="left:1217px;top:388px;width:183px;background:#00ff00"></div>
<div class="ct" style="left:1219.5px;width:179.5px;top:388px;color:#0a3a0a">Barcellona</div>
<div class="ind" style="top:405px"></div>
<div class="cb" style="left:26px;top:406px;width:32px;background:#ff69b4"></div>
<div class="ct" style="left:28px;width:28px;text-align:right;top:406px;color:#3a0a20">2017</div>
<div class="cb" style="left:59px;top:406px;width:41px;background:#ff69b4"></div>
<div class="ct" style="left:59px;width:39px;text-align:right;top:406px;color:#3a0a20">2377</div>
<div class="cb" style="left:101px;top:406px;width:50px;background:#ff0000"></div>
<div class="ct" style="left:101px;width:50px;text-align:center;top:406px;color:#3a0000">N</div>
<div class="cb" style="left:152px;top:406px;width:19px;background:#ff69b4"></div>
<div class="ct" style="left:152px;width:19px;text-align:center;top:406px;color:#3a0a20">A</div>
<div class="cb" style="left:172px;top:406px;width:47px;background:#ff69b4"></div>
<div class="ct" style="left:174.5px;width:43.5px;top:406px;color:#3a0a20">WB1</div>
<div class="cb" style="left:220px;top:406px;width:170px;background:#ff69b4"></div>
<div class="ct" style="left:222.5px;width:166.5px;top:406px;color:#3a0a20">Apertura chiamata da WEB</div>
<div class="cb" style="left:391px;top:406px;width:118px;background:#ff69b4"></div>
<div class="cb" style="left:510px;top:406px;width:37px;background:#ff69b4"></div>
<div class="ct" style="left:512.5px;width:33.5px;top:406px;color:#3a0a20">172</div>
<div class="cb" style="left:548px;top:406px;width:122px;background:#ff69b4"></div>
<div class="ct" style="left:550.5px;width:118.5px;top:406px;color:#3a0a20">Banca Popolare</div>
<div class="cb" style="left:671px;top:406px;width:63px;background:#ff69b4"></div>
<div class="ct" style="left:673.5px;width:59.5px;top:406px;color:#3a0a20">06/02/2017</div>
<div class="cb" style="left:735px;top:406px;width:48px;background:#ff69b4"></div>
<div class="ct" style="left:737.5px;width:44.5px;top:406px;color:#3a0a20">11.32</div>
<div class="cb" style="left:784px;top:406px;width:49px;background:#ff69b4"></div>
<div class="ct" style="left:786.5px;width:45.5px;top:406px;color:#3a0a20">64</div>
<div class="cb" style="left:834px;top:406px;width:137px;background:#ff69b4"></div>
<div class="ct" style="left:836.5px;width:133.5px;top:406px;color:#3a0a20">Notebook</div>
<div class="cb" style="left:972px;top:406px;width:122px;background:#ff69b4"></div>
<div class="ct" style="left:974.5px;width:118.5px;top:406px;color:#3a0a20">Banca Popolare</div>
<div class="cb" style="left:1095px;top:406px;width:121px;background:#ff69b4"></div>
<div class="ct" style="left:1097.5px;width:117.5px;top:406px;color:#3a0a20">Piazza Del Monte</div>
<div class="cb" style="left:1217px;top:406px;width:183px;background:#ff69b4"></div>
<div class="ct" style="left:1219.5px;width:179.5px;top:406px;color:#3a0a20">Reggio Emilia</div>
<div class="ind" style="top:423px"></div>
<div class="cb" style="left:26px;top:424px;width:32px;background:#f1f6fb"></div>
<div class="ct" style="left:28px;width:28px;text-align:right;top:424px;color:#000">2017</div>
<div class="cb" style="left:59px;top:424px;width:41px;background:#f1f6fb"></div>
<div class="ct" style="left:59px;width:39px;text-align:right;top:424px;color:#000">2375</div>
<div class="cb" style="left:101px;top:424px;width:50px;background:#ff0000"></div>
<div class="ct" style="left:101px;width:50px;text-align:center;top:424px;color:#3a0000">N</div>
<div class="cb" style="left:152px;top:424px;width:19px;background:#f1f6fb"></div>
<div class="ct" style="left:152px;width:19px;text-align:center;top:424px;color:#000">A</div>
<div class="cb" style="left:172px;top:424px;width:47px;background:#f1f6fb"></div>
<div class="ct" style="left:174.5px;width:43.5px;top:424px;color:#000">LAB</div>
<div class="cb" style="left:220px;top:424px;width:170px;background:#f1f6fb"></div>
<div class="ct" style="left:222.5px;width:166.5px;top:424px;color:#000">LAB - Riparazione in laboratorio da eseguire</div>
<div class="cb" style="left:391px;top:424px;width:118px;background:#f1f6fb"></div>
<div class="cb" style="left:510px;top:424px;width:37px;background:#f1f6fb"></div>
<div class="ct" style="left:512.5px;width:33.5px;top:424px;color:#000">172</div>
<div class="cb" style="left:548px;top:424px;width:122px;background:#f1f6fb"></div>
<div class="ct" style="left:550.5px;width:118.5px;top:424px;color:#000">Banca Popolare</div>
<div class="cb" style="left:671px;top:424px;width:63px;background:#f1f6fb"></div>
<div class="ct" style="left:673.5px;width:59.5px;top:424px;color:#000">06/02/2017</div>
<div class="cb" style="left:735px;top:424px;width:48px;background:#f1f6fb"></div>
<div class="ct" style="left:737.5px;width:44.5px;top:424px;color:#000">11.10</div>
<div class="cb" style="left:784px;top:424px;width:49px;background:#f1f6fb"></div>
<div class="ct" style="left:786.5px;width:45.5px;top:424px;color:#000">64</div>
<div class="cb" style="left:834px;top:424px;width:137px;background:#f1f6fb"></div>
<div class="ct" style="left:836.5px;width:133.5px;top:424px;color:#000">Notebook</div>
<div class="cb" style="left:972px;top:424px;width:122px;background:#f1f6fb"></div>
<div class="ct" style="left:974.5px;width:118.5px;top:424px;color:#000">Banca Popolare</div>
<div class="cb" style="left:1095px;top:424px;width:121px;background:#f1f6fb"></div>
<div class="ct" style="left:1097.5px;width:117.5px;top:424px;color:#000">Piazza Del Monte</div>
<div class="cb" style="left:1217px;top:424px;width:183px;background:#f1f6fb"></div>
<div class="ct" style="left:1219.5px;width:179.5px;top:424px;color:#000">Reggio Emilia</div>
</div></div>
<!-- scrollbars -->
<div style="left:1246px;top:136px;width:17px;height:294px;background:#f0f0f0"></div>
<div style="left:1247px;top:153px;width:15px;height:177px;background:#cdcdcd"></div>
<div style="left:15px;top:430px;width:1231px;height:15px;background:#f0f0f0"></div>
<div style="left:30px;top:431px;width:512px;height:13px;background:#cdcdcd"></div>
<div style="left:1246px;top:430px;width:17px;height:15px;background:#f0f0f0"></div>

<div class="cwb" style="left:1166px;top:64px;width:32px;height:18px"></div>
<div class="cwb" style="left:1200px;top:64px;width:32px;height:18px"></div>
<div class="cwb" style="left:1234px;top:64px;width:32px;height:18px"></div>
<div style="left:1176px;top:72px;width:11px;height:5px;border:1.5px solid #333;border-radius:1.5px;background:#f4f4f4"></div>
<div style="left:1210px;top:68px;width:11px;height:9px;border:1.5px solid #333;border-radius:1px;background:#f4f4f4"></div>
<div style="left:1213px;top:71px;width:5px;height:3px;border:1px solid #333"></div>
<svg style="position:absolute;left:1243px;top:67px" width="13" height="11"><path d="M1 1.5 L4 0.8 L6.5 3.5 L9 0.8 L12 1.5 L8.5 5.5 L12 9.5 L9 10.2 L6.5 7.5 L4 10.2 L1 9.5 L4.5 5.5 Z" fill="#f6f6f6" stroke="#333" stroke-width="1.1" stroke-linejoin="round"/></svg>
<!-- AD icon -->
<svg style="position:absolute;left:11px;top:63px" width="19" height="19"><circle cx="9.5" cy="9.5" r="8" fill="#12a212"/><path d="M4 14.5 A8 8 0 0 0 15 15 M15 4 A8 8 0 0 1 17 9" fill="none" stroke="#111" stroke-width="1.3" stroke-dasharray="1.5 1"/><text x="9.5" y="12" font-family="Liberation Sans" font-weight="bold" font-size="7" fill="#e0c040" text-anchor="middle">AD</text></svg>
<!-- scrollbar arrows -->
<svg style="position:absolute;left:1249px;top:141px" width="10" height="8"><path d="M1 6 L5 2 L9 6" fill="none" stroke="#4a4a4a" stroke-width="1.9"/></svg>
<svg style="position:absolute;left:1249px;top:417px" width="10" height="8"><path d="M1 2 L5 6 L9 2" fill="none" stroke="#555" stroke-width="1.6"/></svg>
<svg style="position:absolute;left:19px;top:433px" width="8" height="10"><path d="M6 1 L2 5 L6 9" fill="none" stroke="#555" stroke-width="1.6"/></svg>
<svg style="position:absolute;left:1234px;top:433px" width="8" height="10"><path d="M2 1 L6 5 L2 9" fill="none" stroke="#555" stroke-width="1.6"/></svg>

<!-- status inner -->
<div style="left:10px;top:708px;width:1256px;height:2px;background:#a0a0a0"></div>

<!-- toolbar -->
<div style="left:14px;top:90px;width:2px;height:16px;background:repeating-linear-gradient(#a8a8a8 0 1px,transparent 1px 2px)"></div>
<svg style="position:absolute;left:21px;top:90px" width="14" height="18"><path d="M7 1 L13 1 L8 7 L11 7 L3 17 L6 9 L2 9 Z" fill="#f5e642" stroke="#8a7a10" stroke-width="0.8"/></svg>
<svg style="position:absolute;left:47px;top:92px" width="11" height="11"><path d="M3.5 0 H7.5 V3.5 H11 V7.5 H7.5 V11 H3.5 V7.5 H0 V3.5 H3.5 Z" fill="#4646c8"/></svg>
<svg style="position:absolute;left:67px;top:101px" width="6" height="4"><path d="M0 0 H6 L3 3 Z" fill="#000"/></svg>
<div style="left:142px;top:90px;width:2px;height:16px;background:repeating-linear-gradient(#a8a8a8 0 1px,transparent 1px 2px)"></div>
<svg style="position:absolute;left:148px;top:90px" width="17" height="15"><path d="M1 4 H5 L6 5 H11 V7 H4 L1 14 Z" fill="#d8d088" stroke="#707040" stroke-width="0.9"/><path d="M1 14 L4 7 H16 L13 14 Z" fill="#c8c070" stroke="#707040" stroke-width="0.9"/><path d="M9 3 Q12 0 15 4" fill="none" stroke="#404040" stroke-width="1.1"/><path d="M13.5 4 L15.5 5 L16 2.5" fill="none" stroke="#404040" stroke-width="1"/></svg>
<svg style="position:absolute;left:172px;top:91px" width="15" height="15"><rect x="0.7" y="0.7" width="13.6" height="13.6" fill="#8a8a68" stroke="#5a5a40" stroke-width="1.2"/><rect x="3" y="1" width="8" height="5" fill="#e8e8dc"/><rect x="3.5" y="9" width="8" height="5" fill="#3a3a2a"/><rect x="8" y="10" width="2" height="3" fill="#e8e8dc"/></svg>
<svg style="position:absolute;left:194px;top:101px" width="6" height="4"><path d="M0 0 H6 L3 3 Z" fill="#000"/></svg>
<div style="left:259px;top:90px;width:2px;height:16px;background:repeating-linear-gradient(#a8a8a8 0 1px,transparent 1px 2px)"></div>
<svg style="position:absolute;left:266px;top:91px" width="16" height="14"><path d="M0 0 H5 L8 4 L11 0 H16 L10 7 L16 14 H11 L8 10 L5 14 H0 L6 7 Z" fill="#2a78c8"/><path d="M0 0 H5 L8 4 L6 7 Z" fill="#30a0a0"/></svg>
<svg style="position:absolute;left:290px;top:91px" width="14" height="14"><rect x="0.5" y="0.5" width="13" height="13" fill="#fff" stroke="#333"/><path d="M3 4 H11 M3 7 H11 M3 10 H11" stroke="#555"/></svg>
<svg style="position:absolute;left:312px;top:90px" width="16" height="16"><rect x="0.5" y="0.5" width="11" height="7" fill="#dde" stroke="#333"/><rect x="5.5" y="7.5" width="10" height="6" fill="#eee" stroke="#333"/><path d="M3 8 V13 H6" fill="none" stroke="#333" stroke-width="1.3"/></svg>
<svg style="position:absolute;left:334px;top:90px" width="18" height="16"><rect x="0.5" y="3.5" width="8" height="6" fill="#f4f4f4" stroke="#333"/><rect x="4.5" y="0.5" width="8" height="5" fill="#f4f4f4" stroke="#333"/><path d="M12 9 L17 12 L12 15 Z" fill="#b0405a"/><path d="M10 9 V15" stroke="#b0405a"/></svg>
<svg style="position:absolute;left:357px;top:91px" width="18" height="15"><path d="M4 0.5 H13 V5 H4 Z" fill="#fff" stroke="#444"/><rect x="0.5" y="5.5" width="17" height="7" rx="2" fill="#aaa" stroke="#444"/><rect x="3" y="10" width="12" height="4" fill="#ddd" stroke="#444" stroke-width="0.8"/></svg>
<svg style="position:absolute;left:381px;top:97px" width="6" height="4"><path d="M0 0 H6 L3 3 Z" fill="#000"/></svg>
<svg style="position:absolute;left:394px;top:91px" width="18" height="15"><path d="M4 0.5 H13 V5 H4 Z" fill="#fff" stroke="#333"/><rect x="0.5" y="5.5" width="17" height="8" rx="2" fill="#5a5acb" stroke="#2a2a80"/><rect x="3" y="8" width="12" height="2" fill="#c8c8f0"/></svg>
<svg style="position:absolute;left:417px;top:101px" width="6" height="4"><path d="M0 0 H6 L3 3 Z" fill="#000"/></svg>
<div style="left:530px;top:90px;width:2px;height:16px;background:repeating-linear-gradient(#a8a8a8 0 1px,transparent 1px 2px)"></div>
<svg style="position:absolute;left:537px;top:93px" width="15" height="11"><rect x="0" y="1" width="3" height="9" fill="#3a6aa0"/><path d="M3 1 H9 L14 4 H9 V9 H3 Z" fill="#f3e27a" stroke="#444" stroke-width="0.8"/></svg>
<svg style="position:absolute;left:560px;top:101px" width="6" height="4"><path d="M0 0 H6 L3 3 Z" fill="#000"/></svg>
<!-- tabs top -->
<div style="left:10px;top:131px;width:1256px;height:1px;background:#fff"></div>
<div style="left:58px;top:114px;width:92px;height:18px;background:#f0f0f0;border-top:1px solid #fff;border-left:1px solid #fff;border-right:2px solid #8a8a8a"></div>
<div style="left:150px;top:114px;width:42px;height:18px;background:#f0f0f0;border-top:1px solid #fff;border-left:1px solid #fff;border-right:2px solid #8a8a8a"></div>
<div style="left:14px;top:112px;width:45px;height:21px;background:#f0f0f0;border-top:1px solid #fff;border-left:1px solid #fff;border-right:2px solid #8a8a8a"></div>
<div class="lbl" style="left:18px;top:115px">Elenco</div>
<div class="lbl" style="left:63px;top:117px">Elenco Avanzato</div>
<div class="lbl" style="left:156px;top:117px">Export</div>
<!-- splitter -->
<div style="left:10px;top:450px;width:1257px;height:1px;background:#5e5e5e"></div><div style="left:10px;top:451px;width:1257px;height:1px;background:#b8b8b8"></div>
<div style="left:1265px;top:131px;width:2px;height:320px;background:#7a7a7a"></div>
<!-- RICERCHE header -->
<div style="left:10px;top:457px;width:1257px;height:19px;background:#a6c8ee;border-bottom:1px solid #95abc6;border-right:1px solid #8a9ab0"></div>
<div class="lbl" style="left:17px;top:459px;font-weight:bold;font-size:11.7px;color:#111">RICERCHE</div>
<!-- lower tabs -->
<div style="left:10px;top:497px;width:1256px;height:1px;background:#fff"></div>
<div style="left:71px;top:479px;width:57px;height:19px;background:#f0f0f0;border-top:1px solid #fff;border-left:1px solid #fff;border-right:2px solid #8a8a8a"></div>
<div style="left:127px;top:479px;width:60px;height:19px;background:#f0f0f0;border-top:1px solid #fff;border-left:1px solid #fff;border-right:2px solid #8a8a8a"></div>
<div style="left:14px;top:476px;width:58px;height:22px;background:#f0f0f0;border-top:1px solid #fff;border-left:1px solid #fff;border-right:2px solid #8a8a8a"></div>
<div class="lbl" style="left:18px;top:480px">Ricerca 1</div>
<div class="lbl" style="left:76px;top:482px">Ricerca 2</div>
<div class="lbl" style="left:134px;top:482px">Ricerca 3</div>
<div class="lbl" style="left:24px;top:508px">Cod. Cliente</div>
<div class="lbl" style="left:24px;top:532px">Impianto</div>
<div class="lbl" style="left:24px;top:556px">Ragione Sociale</div>
<div class="lbl" style="left:24px;top:580px">Anno/Numero Richiesta</div>
<div class="lbl" style="left:24px;top:604px">Stato</div>
<div class="lbl" style="left:24px;top:628px">Tipo Intervento</div>
<div class="inp" style="left:145px;top:504px;width:79px;height:20px"></div>
<div class="btn" style="left:228px;top:504px;width:24px;height:22px"></div><svg style="position:absolute;left:228px;top:504px" width="24" height="22"><path d="M4.8 15.2 V4.8 H10.8 L13.5 7.5 V11 H10.5 V15.2 Z" fill="#fff" stroke="#000" stroke-width="1.6" stroke-linejoin="miter"/><path d="M6.5 7.5 H8 M6.5 10 H8 M6.5 12.5 H8" stroke="#000" stroke-width="1.3"/><path d="M10.2 11 H13.8 V8 L19.8 13.4 L14 18.8 V15.6 H10.2 Z" fill="#ee0a0a"/><path d="M13.8 8 L19.8 13.4 L14 18.8" fill="none" stroke="#000" stroke-width="1.1"/></svg>
<div class="inp" style="left:145px;top:528px;width:79px;height:20px"></div>
<div class="btn" style="left:228px;top:528px;width:24px;height:22px"></div><svg style="position:absolute;left:228px;top:528px" width="24" height="22"><path d="M4.8 15.2 V4.8 H10.8 L13.5 7.5 V11 H10.5 V15.2 Z" fill="#fff" stroke="#000" stroke-width="1.6" stroke-linejoin="miter"/><path d="M6.5 7.5 H8 M6.5 10 H8 M6.5 12.5 H8" stroke="#000" stroke-width="1.3"/><path d="M10.2 11 H13.8 V8 L19.8 13.4 L14 18.8 V15.6 H10.2 Z" fill="#ee0a0a"/><path d="M13.8 8 L19.8 13.4 L14 18.8" fill="none" stroke="#000" stroke-width="1.1"/></svg>
<div class="inp" style="left:145px;top:552px;width:268px;height:20px"></div>
<div class="inp" style="left:145px;top:576px;width:79px;height:20px"></div>
<div class="lbl" style="left:231px;top:580px">/</div>
<div class="inp" style="left:245px;top:576px;width:93px;height:20px"></div>
<div class="inp" style="left:145px;top:600px;width:240px;height:20px"></div><div class="dd" style="left:367px;top:602px;width:16px;height:17px"></div><svg style="position:absolute;left:371px;top:608px" width="8" height="5"><path d="M0 0 H8 L4 4 Z" fill="#000"/></svg>
<div class="btn" style="left:390px;top:600px;width:24px;height:22px"></div><svg style="position:absolute;left:390px;top:600px" width="24" height="22"><path d="M4.8 15.2 V4.8 H10.8 L13.5 7.5 V11 H10.5 V15.2 Z" fill="#fff" stroke="#000" stroke-width="1.6" stroke-linejoin="miter"/><path d="M6.5 7.5 H8 M6.5 10 H8 M6.5 12.5 H8" stroke="#000" stroke-width="1.3"/><path d="M10.2 11 H13.8 V8 L19.8 13.4 L14 18.8 V15.6 H10.2 Z" fill="#ee0a0a"/><path d="M13.8 8 L19.8 13.4 L14 18.8" fill="none" stroke="#000" stroke-width="1.1"/></svg>
<div class="btn" style="left:419px;top:600px;width:21px;height:22px"></div><svg style="position:absolute;left:419px;top:600px" width="21" height="22"><path d="M4 12.5 L11 5.5 Q13 4 15 5.5 L16 6.5 Q17 8.5 15.5 10 L10 15.5 H7 Q5 15.5 4 14 Z" fill="#dcdcdc" stroke="#111" stroke-width="1.3"/><path d="M10 15.5 H17" stroke="#111" stroke-width="1.4"/></svg>
<div class="inp" style="left:145px;top:624px;width:268px;height:20px"></div><div class="dd" style="left:395px;top:626px;width:16px;height:17px"></div><svg style="position:absolute;left:399px;top:632px" width="8" height="5"><path d="M0 0 H8 L4 4 Z" fill="#000"/></svg>
<div class="btn" style="left:419px;top:624px;width:21px;height:22px"></div><svg style="position:absolute;left:419px;top:624px" width="21" height="22"><path d="M4 12.5 L11 5.5 Q13 4 15 5.5 L16 6.5 Q17 8.5 15.5 10 L10 15.5 H7 Q5 15.5 4 14 Z" fill="#dcdcdc" stroke="#111" stroke-width="1.3"/><path d="M10 15.5 H17" stroke="#111" stroke-width="1.4"/></svg>
<div class="lbl" style="left:446px;top:508px">CAT</div>
<div class="lbl" style="left:446px;top:532px">Ticket 1</div>
<div class="lbl" style="left:446px;top:556px">Ticket 2</div>
<div class="lbl" style="left:446px;top:580px">Matricola</div>
<div class="lbl" style="left:446px;top:604px">Data Registrazione dal</div>
<div class="lbl" style="left:446px;top:628px">Data Chiusura dal</div>
<div class="inp" style="left:556px;top:504px;width:73px;height:20px"></div>
<div class="btn" style="left:632px;top:504px;width:24px;height:22px"></div><svg style="position:absolute;left:632px;top:504px" width="24" height="22"><path d="M4.8 15.2 V4.8 H10.8 L13.5 7.5 V11 H10.5 V15.2 Z" fill="#fff" stroke="#000" stroke-width="1.6" stroke-linejoin="miter"/><path d="M6.5 7.5 H8 M6.5 10 H8 M6.5 12.5 H8" stroke="#000" stroke-width="1.3"/><path d="M10.2 11 H13.8 V8 L19.8 13.4 L14 18.8 V15.6 H10.2 Z" fill="#ee0a0a"/><path d="M13.8 8 L19.8 13.4 L14 18.8" fill="none" stroke="#000" stroke-width="1.1"/></svg>
<div class="inp" style="left:556px;top:528px;width:202px;height:20px"></div>
<div class="inp" style="left:556px;top:552px;width:202px;height:20px"></div>
<div class="inp" style="left:556px;top:576px;width:202px;height:20px"></div>
<div class="inp" style="left:556px;top:600px;width:89px;height:20px"></div><div class="dd" style="left:627px;top:602px;width:16px;height:17px"></div><svg style="position:absolute;left:631px;top:608px" width="8" height="5"><path d="M0 0 H8 L4 4 Z" fill="#000"/></svg><div class="lbl" style="left:565px;top:603px">/</div><div class="lbl" style="left:577px;top:603px">/</div>
<div class="lbl" style="left:649px;top:605px">al</div>
<div class="inp" style="left:670px;top:600px;width:88px;height:20px"></div><div class="dd" style="left:740px;top:602px;width:16px;height:17px"></div><svg style="position:absolute;left:744px;top:608px" width="8" height="5"><path d="M0 0 H8 L4 4 Z" fill="#000"/></svg><div class="lbl" style="left:679px;top:603px">/</div><div class="lbl" style="left:691px;top:603px">/</div>
<div class="inp" style="left:556px;top:624px;width:89px;height:20px"></div><div class="dd" style="left:627px;top:626px;width:16px;height:17px"></div><svg style="position:absolute;left:631px;top:632px" width="8" height="5"><path d="M0 0 H8 L4 4 Z" fill="#000"/></svg><div class="lbl" style="left:565px;top:627px">/</div><div class="lbl" style="left:577px;top:627px">/</div>
<div class="lbl" style="left:649px;top:629px">al</div>
<div class="inp" style="left:670px;top:624px;width:88px;height:20px"></div><div class="dd" style="left:740px;top:626px;width:16px;height:17px"></div><svg style="position:absolute;left:744px;top:632px" width="8" height="5"><path d="M0 0 H8 L4 4 Z" fill="#000"/></svg><div class="lbl" style="left:679px;top:627px">/</div><div class="lbl" style="left:691px;top:627px">/</div>
<div class="lbl" style="left:447px;top:652px">Chiamate Sollecitate</div>
<div style="left:554px;top:652px;width:11px;height:11px;background:#fff;border-top:1px solid #8a8a8a;border-left:1px solid #8a8a8a;border-right:1px solid #e0e0e0;border-bottom:1px solid #e0e0e0"></div>
<div class="lbl" style="left:650px;top:652px">Includo riparazioni</div>
<div style="left:746px;top:652px;width:11px;height:11px;background:#fff;border-top:1px solid #8a8a8a;border-left:1px solid #8a8a8a;border-right:1px solid #e0e0e0;border-bottom:1px solid #e0e0e0"></div>
<div style="left:38px;top:654px;width:370px;height:24px;border-top:1px solid #a0a0a0;border-left:1px solid #a0a0a0;border-right:1px solid #fff;border-bottom:1px solid #fff;box-shadow:inset -1px -1px 0 #a0a0a0, 1px 1px 0 #fff"></div>
<svg style="position:absolute;left:47px;top:662px" width="12" height="12"><circle cx="6" cy="6" r="5" fill="#fbfbfb" stroke="#c4c4c4" stroke-width="1"/><path d="M2.2 9.8 A5.2 5.2 0 0 1 9.8 2.2" fill="none" stroke="#7a7a7a" stroke-width="1.1"/></svg>
<div class="lbl" style="left:64px;top:663px">Tutte</div>
<svg style="position:absolute;left:119px;top:662px" width="12" height="12"><circle cx="6" cy="6" r="5" fill="#fbfbfb" stroke="#c4c4c4" stroke-width="1"/><path d="M2.2 9.8 A5.2 5.2 0 0 1 9.8 2.2" fill="none" stroke="#7a7a7a" stroke-width="1.1"/><circle cx="6" cy="6" r="2" fill="#000"/></svg>
<div class="lbl" style="left:136px;top:663px">Aperte</div>
<svg style="position:absolute;left:191px;top:662px" width="12" height="12"><circle cx="6" cy="6" r="5" fill="#fbfbfb" stroke="#c4c4c4" stroke-width="1"/><path d="M2.2 9.8 A5.2 5.2 0 0 1 9.8 2.2" fill="none" stroke="#7a7a7a" stroke-width="1.1"/></svg>
<div class="lbl" style="left:208px;top:663px">Chiuse</div>
<svg style="position:absolute;left:263px;top:662px" width="12" height="12"><circle cx="6" cy="6" r="5" fill="#fbfbfb" stroke="#c4c4c4" stroke-width="1"/><path d="M2.2 9.8 A5.2 5.2 0 0 1 9.8 2.2" fill="none" stroke="#7a7a7a" stroke-width="1.1"/></svg>
<div class="lbl" style="left:280px;top:663px">Sospese</div>
<svg style="position:absolute;left:335px;top:662px" width="12" height="12"><circle cx="6" cy="6" r="5" fill="#fbfbfb" stroke="#c4c4c4" stroke-width="1"/><path d="M2.2 9.8 A5.2 5.2 0 0 1 9.8 2.2" fill="none" stroke="#7a7a7a" stroke-width="1.1"/></svg>
<div class="lbl" style="left:351px;top:663px">Annullate</div>
<div class="bigbtn" style="left:38px;top:681px;width:371px;height:25px"></div>
<div class="lbl" style="left:38px;top:686px;width:371px;text-align:center;letter-spacing:0.3px"><u>C</u> E R C A</div>
<div class="bigbtn" style="left:445px;top:681px;width:372px;height:25px"></div>
<div class="lbl" style="left:445px;top:686px;width:372px;text-align:center;letter-spacing:3px"><u>I</u>NSERIRE RICHIESTE INTERVENTO</div>
<!-- lower panel border -->
<div style="left:1265px;top:498px;width:2px;height:212px;background:#7a7a7a"></div>
<!-- inner status -->
<div class="sp" style="left:10px;top:712px;width:199px;height:16px"></div>
<div class="sp" style="left:212px;top:712px;width:97px;height:16px"></div>
<div class="sp" style="left:312px;top:712px;width:954px;height:16px"></div>
<div class="lbl" style="left:12px;top:714px">N. record estratti: 19</div>
<svg style="position:absolute;left:1255px;top:716px" width="12" height="12"><path d="M11 1 L1 11 M11 5 L5 11 M11 9 L9 11" stroke="#9a9a9a" stroke-width="1.2"/></svg>
<div style="left:1245px;top:687px;width:19px;height:18px;border-top:1px solid #fafafa;border-left:1px solid #fafafa;border-right:1px solid #a8a8a8;border-bottom:1px solid #a8a8a8"></div>
<svg style="position:absolute;left:1246px;top:688px" width="17" height="16"><path d="M2 10 L9 3 Q11 1 13 3 L14 4 Q15 6 13 8 L7 13 H3 Z" fill="#f0c828" stroke="#222" stroke-width="1.3"/><path d="M7 13 H15" stroke="#222" stroke-width="1.3"/></svg>
<!-- app status bar -->
<div style="left:0;top:737px;width:1279px;height:24px;background:linear-gradient(#e6f0fb,#d0e2f7 30%,#b9d5f8 55%,#c4daf5 85%,#d2e3f6 96%,#5a6a80 96%)"></div>
<div style="left:152px;top:738px;width:2px;height:22px;border-left:1px solid #76869c;border-right:1px solid #eef4fb"></div>
<div style="left:306px;top:738px;width:2px;height:22px;border-left:1px solid #76869c;border-right:1px solid #eef4fb"></div>
<div style="left:462px;top:738px;width:2px;height:22px;border-left:1px solid #76869c;border-right:1px solid #eef4fb"></div>
<div style="left:617px;top:738px;width:2px;height:22px;border-left:1px solid #76869c;border-right:1px solid #eef4fb"></div>
<div style="left:772px;top:738px;width:2px;height:22px;border-left:1px solid #76869c;border-right:1px solid #eef4fb"></div>
<div style="left:877px;top:738px;width:2px;height:22px;border-left:1px solid #76869c;border-right:1px solid #eef4fb"></div>
<div style="left:1082px;top:738px;width:2px;height:22px;border-left:1px solid #76869c;border-right:1px solid #eef4fb"></div>
<div class="lbl" style="left:2px;top:742px;color:#15375f">DEMO</div>
<div class="lbl" style="left:156px;top:742px;color:#15375f">Utente: admin</div>
<div class="lbl" style="left:310px;top:742px;color:#15375f">Versione: (STANDARD)</div>
<div class="lbl" style="left:621px;top:742px;color:#15375f">2 utenti</div>
<div class="lbl" style="left:776px;top:742px;color:#15375f">Release 3.26.03</div>
<div class="lbl" style="left:1087px;top:742px;color:#8a9bb0">CAPS</div>
<div class="lbl" style="left:1121px;top:742px;color:#15375f">NUM</div>
<div class="lbl" style="left:1153px;top:742px;color:#8a9bb0">SCRL</div>
<div class="lbl" style="left:1190px;top:742px;color:#8a9bb0">INS</div>
</body></html>
